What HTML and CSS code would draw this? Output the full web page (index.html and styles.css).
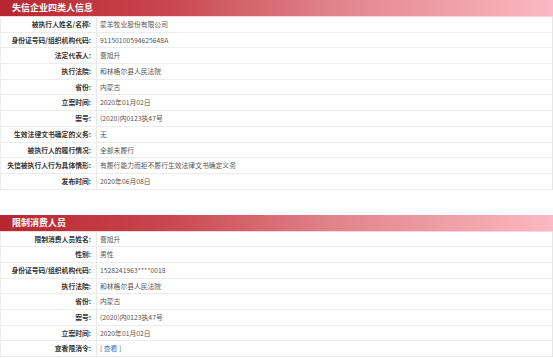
FILE: index.html
```html
<!DOCTYPE html>
<html lang="zh">
<head>
<meta charset="utf-8">
<link rel="stylesheet" href="styles.css">
</head>
<body>
<section class="block">
  <div class="head">失信企业四类人信息</div>
  <div class="table">
    <div class="row"><div class="lbl">被执行人姓名/名称:</div><div class="val">蒙羊牧业股份有限公司</div></div>
    <div class="row"><div class="lbl">身份证号码/组织机构代码:</div><div class="val">91150100594625648A</div></div>
    <div class="row"><div class="lbl">法定代表人:</div><div class="val">曹旭升</div></div>
    <div class="row"><div class="lbl">执行法院:</div><div class="val">和林格尔县人民法院</div></div>
    <div class="row"><div class="lbl">省份:</div><div class="val">内蒙古</div></div>
    <div class="row"><div class="lbl">立案时间:</div><div class="val">2020年01月02日</div></div>
    <div class="row"><div class="lbl">案号:</div><div class="val">(2020)内0123执47号</div></div>
    <div class="row"><div class="lbl">生效法律文书确定的义务:</div><div class="val">无</div></div>
    <div class="row"><div class="lbl">被执行人的履行情况:</div><div class="val">全部未履行</div></div>
    <div class="row"><div class="lbl">失信被执行人行为具体情形:</div><div class="val">有履行能力而拒不履行生效法律文书确定义务</div></div>
    <div class="row"><div class="lbl">发布时间:</div><div class="val">2020年06月08日</div></div>
  </div>
</section>
<section class="block second">
  <div class="head">限制消费人员</div>
  <div class="table">
    <div class="row"><div class="lbl">限制消费人员姓名:</div><div class="val">曹旭升</div></div>
    <div class="row"><div class="lbl">性别:</div><div class="val">男性</div></div>
    <div class="row"><div class="lbl">身份证号码/组织机构代码:</div><div class="val">1528241963****0018</div></div>
    <div class="row"><div class="lbl">执行法院:</div><div class="val">和林格尔县人民法院</div></div>
    <div class="row"><div class="lbl">省份:</div><div class="val">内蒙古</div></div>
    <div class="row"><div class="lbl">案号:</div><div class="val">(2020)内0123执47号</div></div>
    <div class="row"><div class="lbl">立案时间:</div><div class="val">2020年01月02日</div></div>
    <div class="row"><div class="lbl">查看限消令:</div><div class="val">[ <a class="link" href="#">查看</a> ]</div></div>
  </div>
</section>
</body>
</html>
```
FILE: styles.css
```css
html, body {
  margin: 0;
  padding: 0;
  background: #ffffff;
}
body {
  width: 553px;
  font-family: "Noto Sans CJK SC", "Liberation Sans", sans-serif;
  font-size: 6.8px;
  color: #444;
}
.block {
  display: flex;
  flex-direction: column;
}
.second {
  margin-top: 25px;
}
.head {
  height: 16px;
  line-height: 16px;
  padding-left: 12px;
  font-size: 9px;
  font-weight: bold;
  color: #ffffff;
  background: linear-gradient(to right, #b8262f 0%, #c9464e 30%, #e0838a 60%, #fcb9c3 100%);
  border-bottom: 1px solid #f6d6da;
}
.table {
  display: flex;
  flex-direction: column;
  border-left: 1px solid #ececec;
  border-right: 1px solid #e6e6e6;
}
.row {
  display: grid;
  grid-template-columns: 96px 1fr;
  height: 14.7px;
  border-bottom: 1px solid #ececec;
}
.lbl {
  text-align: right;
  padding-right: 5px;
  line-height: 14.7px;
  color: #333;
  font-weight: bold;
  border-right: 1px solid #e8e8e8;
}
.val {
  padding-left: 3px;
  line-height: 14.7px;
  color: #555;
}
.link {
  color: #3a78d0;
  text-decoration: none;
}
```
